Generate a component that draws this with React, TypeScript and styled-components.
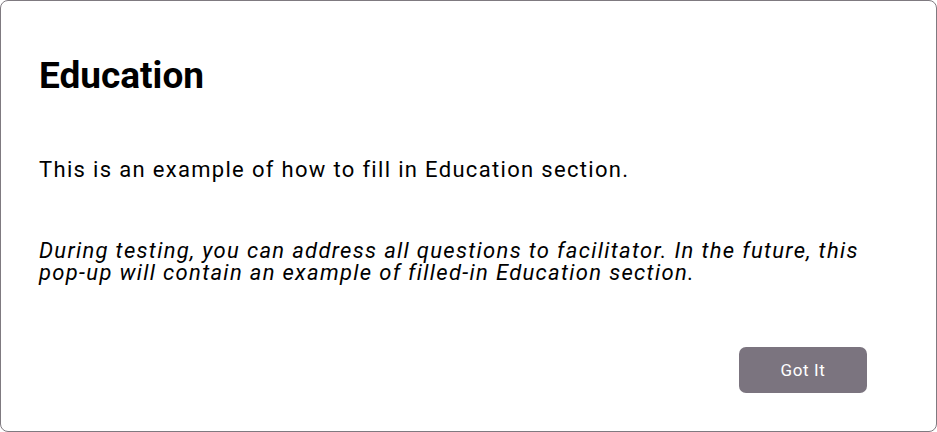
import React from "react";
import styled, { createGlobalStyle } from "styled-components";

const Global = createGlobalStyle`
  html, body { margin: 0; padding: 0; background: #ffffff; }
  body { font-family: Roboto, "Noto Sans", sans-serif; }
  * { box-sizing: border-box; }
`;

const Dialog = styled.div`
  width: 937px;
  height: 432px;
  border: 1px solid #7f7a80;
  border-radius: 8px;
  background: #ffffff;
  padding: 54px 38px 38px 38px;
  display: flex;
  flex-direction: column;
`;

const Title = styled.h1`
  margin: 0;
  font-family: Roboto, sans-serif;
  font-weight: 700;
  font-size: 37px;
  line-height: 42px;
  color: #000000;
`;

const Paragraph = styled.p<{ $italic?: boolean }>`
  margin: 0;
  font-family: Roboto, sans-serif;
  font-size: 22px;
  line-height: 22px;
  color: #000000;
  font-style: ${(p) => (p.$italic ? "italic" : "normal")};
  letter-spacing: 1.32px;
  white-space: nowrap;
`;

const Body = styled.div`
  display: flex;
  flex-direction: column;
  gap: 59px;
  margin-top: 62px;
`;

const Footer = styled.div`
  margin-top: auto;
  display: flex;
  justify-content: flex-end;
  padding-right: 31px;
`;

const Button = styled.button`
  width: 128px;
  height: 46px;
  border: none;
  border-radius: 7px;
  background: #7b747f;
  color: #ffffff;
  font-family: Roboto, sans-serif;
  font-size: 17px;
  font-weight: 400;
  letter-spacing: 0.6px;
  cursor: pointer;
`;

export default function App() {
  return (
    <>
      <Global />
      <Dialog>
        <Title>Education</Title>
        <Body>
          <Paragraph>This is an example of how to fill in Education section.</Paragraph>
          <Paragraph $italic>
            During testing, you can address all questions to facilitator. In the future, this
            <br />
            pop-up will contain an example of filled-in Education section.
          </Paragraph>
        </Body>
        <Footer>
          <Button>Got It</Button>
        </Footer>
      </Dialog>
    </>
  );
}
